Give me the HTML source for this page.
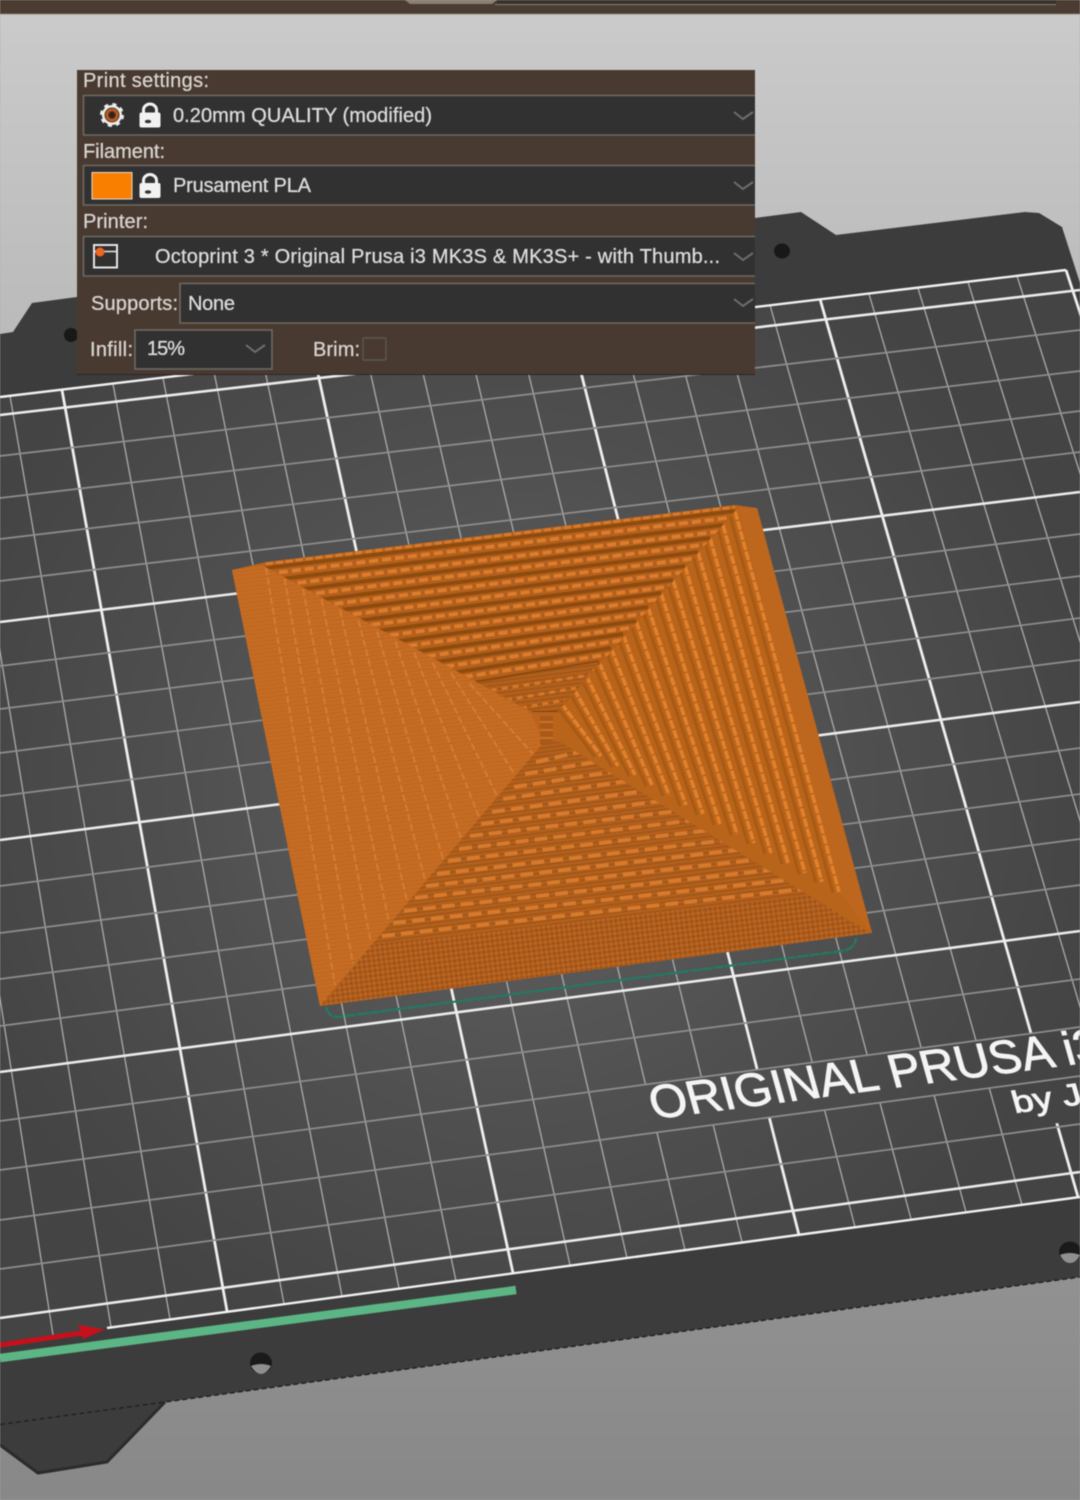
<!DOCTYPE html>
<html>
<head>
<meta charset="utf-8">
<title>Print settings</title>
<style>
html,body{margin:0;padding:0;width:1080px;height:1500px;overflow:hidden;background:#aaa}
svg{display:block;filter:blur(.5px)}
text{font-family:"Liberation Sans",sans-serif}
</style>
</head>
<body>
<svg width="1080" height="1500" viewBox="0 0 1080 1500" xmlns="http://www.w3.org/2000/svg">
<defs>
<linearGradient id="bg" x1="0" y1="0" x2="0" y2="1">
<stop offset="0" stop-color="#cbcbcb"/><stop offset=".2" stop-color="#bcbcbc"/><stop offset="1" stop-color="#888888"/>
</linearGradient>
<radialGradient id="plate" gradientUnits="userSpaceOnUse" cx="520" cy="790" r="600">
<stop offset="0" stop-color="#626262"/><stop offset=".55" stop-color="#505050"/><stop offset="1" stop-color="#444444"/>
</radialGradient>
<pattern id="fine" width="5" height="5" patternUnits="userSpaceOnUse" patternTransform="rotate(-7)">
<rect width="5" height="5" fill="#ad5c1c"/><circle cx="1.5" cy="1.5" r="1.1" fill="#c46c28"/><circle cx="4" cy="4" r="1" fill="#934c15"/>
</pattern>
<pattern id="weave" width="4" height="4" patternUnits="userSpaceOnUse" patternTransform="rotate(-7)">
<rect width="4" height="4" fill="#b2601d"/><rect width="4" height="1.3" fill="#9f5416"/>
</pattern>
<pattern id="leftfine" width="4" height="4" patternUnits="userSpaceOnUse" patternTransform="rotate(-7)">
<rect width="4" height="4" fill="#c56c24"/><rect width="4" height="1" fill="#bc6620"/>
</pattern>
<clipPath id="cTop"><polygon points="262,565 738,508 558,712 532,712"/></clipPath>
<clipPath id="cRight"><polygon points="738,508 868,932 560,742 558,712"/></clipPath>
<clipPath id="cBottom"><polygon points="320,1006 870,933 560,742 544,742"/></clipPath>
<clipPath id="cLeft"><polygon points="232,570 266,565 530,712 545,745 320,1006"/></clipPath>
<path id="rowsTop" d="M266 568L735 511M284.5 578.5L723 525M303 589L710 538M321.5 599.5L698 552M340 610L685 566M358.5 620.5L673 580M377 631L661 593M395.5 641.5L648 607M414 652L636 621M432.5 662.5L623 634M451 673L611 648M469.5 683.5L599 662"/>
<path id="rowsRight" d="M735 511L839 892M723 525L822 882M710 538L805 873M698 552L788 863M685 566L771 853M673 580L754 843M661 593L737 834M648 607L720 824M636 621L703 814M623 634L686 805M611 648L669 795M599 662L652 785M586 675L635 775M574 689L618 766M561 703L601 756"/>
<path id="rowsBottom" d="M371 943L839 892M382 931L822 882M393 918L805 873M404 906L788 863M415 893L771 853M426 881L754 843M437 869L737 834M448 856L720 824M459 844L703 814M470 831L686 805M481 819L669 795M492 807L652 785M503 794L635 775M514 782L618 766M525 769L601 756M536 757L584 746"/>
<g id="lock"><rect x="139.5" y="-2.5" width="21" height="15" rx="2" fill="#f2f2f2"/><path d="M143.5 0V-5a6.5 6 0 0 1 13 0V0" fill="none" stroke="#f2f2f2" stroke-width="3"/><ellipse cx="148" cy="6.5" rx="3.2" ry="1.8" fill="#333"/></g>
<path id="chev" d="M-9 -4L0 3L10 -4" fill="none" stroke="#6d6d6b" stroke-width="2"/>
</defs>

<rect width="1080" height="1500" fill="url(#bg)"/>

<!-- top strip -->
<rect width="1080" height="14" fill="#4a3c32"/>
<rect y="13.5" width="1080" height="1" fill="#8a8578"/>
<path d="M405 0L410 4H492L497 0Z" fill="#8a7f72"/>
<rect x="497" y="0" width="559" height="4" fill="#39322c"/>
<rect x="495" y="4" width="561" height="1.2" fill="#7c766a"/>

<!-- bed -->
<polygon points="0,334 13,332 32,303 77,297 755,218 801,212 836,235 1025,212 1039,213 1062,227 1080,283 1080,1277 165,1402 107,1462 38,1473 0,1445" fill="#3c3c3c"/>
<path d="M0 1424.5L165 1402L1080 1277" fill="none" stroke="#222" stroke-width="1.5" stroke-dasharray="5 3"/>
<path d="M165 1402L107 1462L38 1473L0 1445" fill="none" stroke="#2b2b2b" stroke-width="3"/>
<!-- plate -->
<polygon points="0,397 1066,270 1360,1159 0,1342" fill="url(#plate)"/>
<!-- minor verticals -->
<path fill="none" stroke="#acacac" stroke-width="1.3" d="M-93 408L53 1335M-41 402L111 1327M10 396L170 1319M113 384L284 1304M163 378L342 1296M214 372L399 1288M264 366L456 1281M366 353L570 1265M417 347L627 1258M468 341L685 1250M519 335L742 1242M620 323L855 1227M670 317L911 1219M720 311L966 1212M770 305L1022 1205M869 294L1134 1189M918 288L1190 1182M968 282L1246 1174M1017 276L1302 1167"/>
<path fill="none" stroke="#efefef" stroke-width="2.8" d="M62 390L227 1311M315 360L513 1273M570 329L799 1235M820 299L1078 1197M1066 270L1358 1159"/>
<!-- clear cells around logo -->
<polygon points="640,1085 1080,1027 1080,1076 640,1135" fill="url(#plate)"/>
<polygon points="1030,1079 1080,1072 1080,1120 1030,1127" fill="url(#plate)"/>
<!-- minor horizontals -->
<path fill="none" stroke="#8e8e8e" stroke-width="1.7" d="M0 456L1080 330M0 498L1080 371M0 539L1080 411M0 581L1080 452M0 666L1080 534M0 709L1080 576M0 753L1080 618M0 796L1080 660M0 886L1080 748M0 933L1080 794M0 979L1080 839M0 1026L1080 885M0 1121L1080 979M0 1170L1080 1027M0 1220L1080 1076M0 1269L1080 1124"/>
<!-- major horizontals -->
<path fill="none" stroke="#ececec" stroke-width="2.6" d="M0 415L1080 290M0 622L1080 492M0 840L1080 702M0 1072L1080 931M0 1318L1080 1172"/>
<!-- plate edges -->
<path d="M0 397L1066 270" fill="none" stroke="#f2f2f2" stroke-width="2.4"/>
<path d="M107 1328L1080 1197" fill="none" stroke="#f2f2f2" stroke-width="2.4"/>

<!-- printed logo -->
<g fill="#f4f4f4" stroke="#f4f4f4" stroke-width=".9">
<text transform="matrix(1.035 -.135 .28 1 654 1119)" font-size="46">ORIGINAL PRUSA i3</text>
<text transform="matrix(1.25 -.165 .28 1 1015 1113)" font-size="30">by J</text>
</g>

<!-- holes -->
<ellipse cx="261" cy="1363" rx="11" ry="10.5" fill="#1a1a1a"/><path d="M251 1366Q261 1362 271 1366Q266 1374 261 1374Q256 1374 251 1366Z" fill="#8f8f8f"/>
<ellipse cx="1070" cy="1252" rx="11" ry="10.5" fill="#1a1a1a"/><path d="M1060 1255Q1070 1251 1080 1255Q1076 1263 1070 1263Q1064 1263 1060 1255Z" fill="#8f8f8f"/>
<ellipse cx="782" cy="251" rx="8" ry="7.5" fill="#181818"/>
<ellipse cx="71" cy="335" rx="7" ry="7" fill="#181818"/>

<!-- axes -->
<path d="M0 1345L82 1333" stroke="#c8101c" stroke-width="5" fill="none"/>
<polygon points="78,1325 105,1329.5 83,1339" fill="#c8101c"/>
<path d="M0 1358L516 1290" stroke="#5cb585" stroke-width="8.5" fill="none"/>

<!-- skirt -->
<path d="M326 1007Q328 1017 338 1017L842 951Q855 949 856 938" fill="none" stroke="#1e7c66" stroke-width="2.2" stroke-dasharray="11 1"/>

<!-- object -->
<polygon points="232,570 266,562 735,505 757,508 872,933 320,1006" fill="#b9631d"/>
<!-- left face -->
<polygon points="232,570 266,565 530,712 545,745 320,1006" fill="url(#leftfine)"/>
<g clip-path="url(#cLeft)"><path fill="none" stroke="#dc8033" stroke-width="2" stroke-dasharray="7 3" stroke-opacity=".8" d="M266 568L335 985M284.5 578.5L353 964M303 589L371 943M321.5 599.5L389 922M340 610L407 901M358.5 620.5L425 880M377 631L443 859M395.5 641.5L461 838M414 652L479 817M432.5 662.5L497 796M451 673L515 775M469.5 683.5L533 754"/></g>
<!-- top face -->
<polygon points="262,565 738,508 558,712 532,712" fill="#b4601d"/>
<g clip-path="url(#cTop)">
<use href="#rowsTop" fill="none" stroke="#8d4b0e" stroke-width="3.8"/>
<use href="#rowsTop" transform="translate(0,6)" fill="none" stroke="#dc7d2e" stroke-width="3.8" stroke-dasharray="9 4"/>
<polygon points="470,684 599,662 558,712 532,712" fill="url(#weave)"/>
<path d="M480 692L590 675M495 702L576 688M510 710L565 700" fill="none" stroke="#d57829" stroke-width="3" stroke-dasharray="6 5"/>
<path d="M532 713H558" stroke="#7f420c" stroke-width="4"/>
</g>
<path d="M266 564L735 507" fill="none" stroke="#d87a2c" stroke-width="3" stroke-dasharray="7 3"/>
<!-- right face -->
<polygon points="738,508 757,508 872,933 868,932 560,742 558,712" fill="#b9641b"/>
<polygon points="738,508 757,508 872,933 839,892" fill="#bd661e"/>
<g clip-path="url(#cRight)">
<use href="#rowsRight" transform="translate(-6,1)" fill="none" stroke="#a85a14" stroke-width="3"/>
<use href="#rowsRight" fill="none" stroke="#e0812d" stroke-width="3.6" stroke-dasharray="9 1.5"/>
</g>
<!-- bottom face -->
<polygon points="320,1006 870,933 560,742 544,742" fill="url(#weave)"/>
<g clip-path="url(#cBottom)">
<use href="#rowsBottom" transform="translate(0,5)" fill="none" stroke="#d67a2e" stroke-width="4" stroke-dasharray="13 6"/>
<polygon points="320,1006 870,933 839,892 371,945" fill="url(#fine)"/>
</g>
<rect x="540" y="716" width="13" height="28" fill="#a9591a"/>
<path d="M540 722H553M540 730H553M540 738H553" stroke="#c97127" stroke-width="2"/>

<!-- panel -->
<rect x="77" y="70" width="678" height="304" fill="#483a31"/>
<rect x="77" y="374" width="678" height="1" fill="#2a2622"/>
<g fill="#313131" stroke="#6d6a64" stroke-width="1.6">
<path d="M755 95.5H83.5V135H755"/>
<path d="M755 165.5H83.5V205H755"/>
<path d="M755 236.5H83.5V276H755"/>
<path d="M755 283.5H180V323H755"/>
<rect x="135" y="330" width="137" height="39"/>
</g>
<rect x="363" y="338" width="23" height="22" fill="#483a31" stroke="#5e564f" stroke-width="1.4" rx="1"/>

<!-- labels -->
<g font-size="20" fill="#d9d5d1" stroke="#d9d5d1" stroke-width=".3">
<text x="83" y="87" textLength="126">Print settings:</text>
<text x="83" y="158" textLength="82">Filament:</text>
<text x="83" y="228" textLength="65">Printer:</text>
<text x="91" y="310" textLength="87">Supports:</text>
<text x="90" y="356" textLength="43">Infill:</text>
<text x="313" y="356" textLength="47">Brim:</text>
</g>
<g font-size="20" fill="#dcdcdc" stroke="#dcdcdc" stroke-width=".3">
<text x="173" y="122" textLength="259">0.20mm QUALITY (modified)</text>
<text x="173" y="192" textLength="138">Prusament PLA</text>
<text x="155" y="263" textLength="565">Octoprint 3 * Original Prusa i3 MK3S &amp; MK3S+ - with Thumb...</text>
<text x="188" y="310" textLength="47">None</text>
<text x="147" y="355" textLength="38">15%</text>
</g>

<!-- chevrons -->
<use href="#chev" x="743" y="116"/>
<use href="#chev" x="743" y="186"/>
<use href="#chev" x="743" y="257"/>
<use href="#chev" x="743" y="303"/>
<use href="#chev" x="255" y="349"/>

<!-- icons -->
<circle cx="112" cy="115" r="10" fill="#ededed"/>
<circle cx="112" cy="115" r="10.5" fill="none" stroke="#ededed" stroke-width="3" stroke-dasharray="4.1 4.15"/>
<circle cx="112" cy="115" r="7.5" fill="#3a2a20"/>
<circle cx="112" cy="115" r="5.2" fill="none" stroke="#b9591f" stroke-width="3"/>
<circle cx="112" cy="115" r="2.4" fill="#2a2422"/>
<use href="#lock" y="115"/>
<use href="#lock" y="185.5"/>
<rect x="92" y="172.5" width="40" height="26.5" fill="#f97f00" stroke="#e8dccd" stroke-width="1"/>
<rect x="94" y="245" width="23" height="22.5" fill="none" stroke="#e6e6e6" stroke-width="2"/>
<path d="M94 251.5H117" stroke="#e6e6e6" stroke-width="1.6"/>
<circle cx="100" cy="252" r="4.5" fill="#f0661f"/>
</svg>
</body>
</html>
